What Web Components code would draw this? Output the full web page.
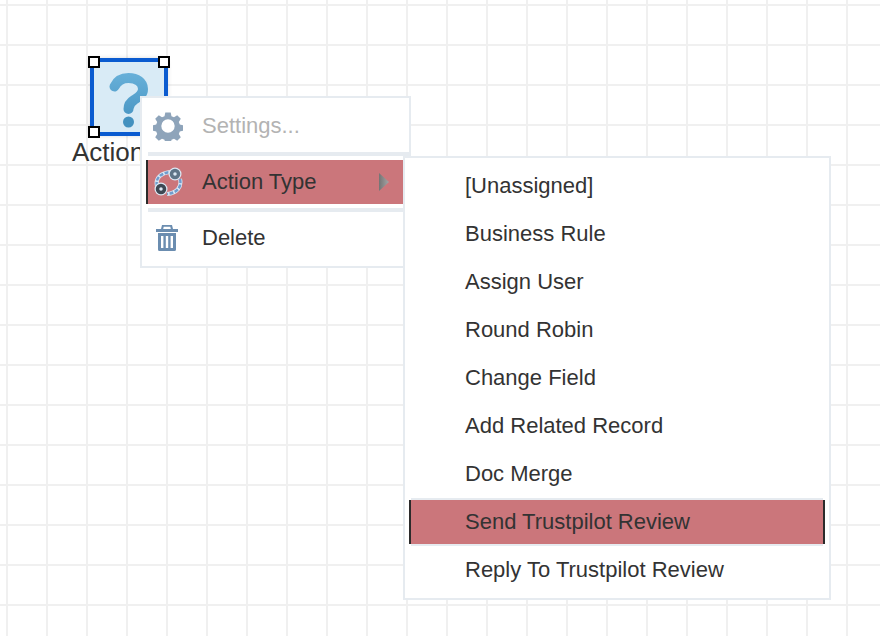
<!DOCTYPE html>
<html lang="en">
<head>
<meta charset="UTF-8">
<title>Workflow designer</title>
<style>
  html, body { margin: 0; padding: 0; background: #fff; }
  body { font-family: "Liberation Sans", Arial, sans-serif; color: #333; }
  svg { display: block; }
</style>
</head>
<body>
<flow-canvas>
  <flow-node label="Action"></flow-node>

  <context-menu style="left:140px;top:96px;width:263px">
    <menu-row disabled>
      <svg slot="icon" width="30" height="30" viewBox="0 0 30 30" style="filter:blur(.6px)"><path fill="#8ea4ba" fill-rule="evenodd" d="M12.300 1.500h5.400l.8 3.700 2.500 1 3.200-2 3.600 3.600-2 3.200 1 2.500 3.700.8v5.400l-3.700.8-1 2.500 2 3.200-3.600 3.600-3.200-2-2.500 1-.8 3.700h-5.400l-.8-3.700-2.500-1-3.200 2-3.600-3.600 2-3.200-1-2.500-3.700-.8v-5.400l3.700-.8 1-2.500-2-3.200 3.600-3.600 3.200 2 2.500-1zM15 8.300a6.700 6.700 0 1 0 0 13.400 6.700 6.700 0 0 0 0-13.400z"/></svg>
      Settings...
    </menu-row>
    <menu-divider></menu-divider>
    <menu-row active arrow>
      <svg slot="icon" width="30" height="30" viewBox="0 0 30 30" fill="none" style="filter:blur(.5px)">
        <path d="M4 19C2 11 8 6 17 5M27 12c2 8-3 14-13 15" stroke="#dce8f4" stroke-width="4"/>
        <path d="M4 19C2 11 8 6 17 5M27 12c2 8-3 14-13 15" stroke="#6f9ccd" stroke-width="2.500" stroke-dasharray="4 1.500"/>
        <circle cx="22" cy="7" r="6.500" fill="#dce8f4"/>
        <circle cx="22" cy="7" r="3.500" stroke="#5f7488" stroke-width="3.500"/>
        <circle cx="8" cy="22" r="6.500" fill="#dce8f4"/>
        <circle cx="8" cy="22" r="3.500" stroke="#3e4854" stroke-width="3.500"/>
      </svg>
      Action Type
    </menu-row>
    <menu-divider></menu-divider>
    <menu-row>
      <svg slot="icon" width="30" height="30" viewBox="1 0 30 30" style="filter:blur(.4px)"><path fill="#6b8db0" fill-rule="evenodd" d="M10 2h10l1 4h5v3H4V6h5zM11.700 3.700l-.5 2.300h7.600l-.5-2.300zM6 10h18v16.500a1.500 1.500 0 0 1-1.500 1.500h-15A1.500 1.500 0 0 1 6 26.500zm3 3v12h2.400V13zm4.800 0v12h2.400V13zm4.800 0v12H21V13z"/></svg>
      Delete
    </menu-row>
  </context-menu>

  <context-menu sub style="left:403px;top:156px;width:416px">
    <menu-row>[Unassigned]</menu-row>
    <menu-row>Business Rule</menu-row>
    <menu-row>Assign User</menu-row>
    <menu-row>Round Robin</menu-row>
    <menu-row>Change Field</menu-row>
    <menu-row>Add Related Record</menu-row>
    <menu-row>Doc Merge</menu-row>
    <menu-row active framed>Send Trustpilot Review</menu-row>
    <menu-row>Reply To Trustpilot Review</menu-row>
  </context-menu>
</flow-canvas>

<script>
  // grid background, everything on it sits at its own canvas position
  class FlowCanvas extends HTMLElement {
    constructor() {
      super();
      this.attachShadow({ mode: 'open' }).innerHTML = `
        <style>
          :host {
            display: block;
            position: relative;
            width: 880px;
            height: 636px;
            overflow: hidden;
            background-color: #fff;
            background-image:
              linear-gradient(to right, #f0f0f0 2px, transparent 2px),
              linear-gradient(to bottom, #f0f0f0 2px, transparent 2px);
            background-size: 40px 40px;
            background-position: 6px 4px;
          }
        </style>
        <slot></slot>`;
    }
  }

  class FlowNode extends HTMLElement {
    constructor() {
      super();
      this.attachShadow({ mode: 'open' }).innerHTML = `
        <style>
          :host { position: absolute; left: 72px; top: 56px; display: block; width: 120px; }
          .box {
            box-sizing: border-box;
            margin: 2px 0 0 18px;
            width: 78px;
            height: 78px;
            border: 4px solid #0a5bd0;
            border-radius: 7px;
            background: #d9ebf6;
            box-shadow: 0 0 4px rgba(0, 0, 0, .15);
            display: flex;
            align-items: center;
            justify-content: center;
          }
          .label { font-size: 26px; line-height: 30px; margin-top: 1px; color: #333; }
          .handle {
            position: absolute;
            box-sizing: border-box;
            width: 12px;
            height: 12px;
            background: #fff;
            border: 2px solid #000;
          }
        </style>
        <div class="box">
          <svg width="56" height="68" viewBox="0 0 56 68" fill="none" style="filter:blur(.4px)">
            <defs>
              <linearGradient id="q" gradientUnits="userSpaceOnUse" x1="0" y1="10" x2="0" y2="64">
                <stop offset="0" stop-color="#68b0d9"/>
                <stop offset="1" stop-color="#4391bf"/>
              </linearGradient>
            </defs>
            <path d="M13.500 23.500C16 18 21 15 27.500 15 36 15 42 19.500 42 26 42 32 37.500 34 33 37 29 39.500 27.500 42 27.500 46" stroke="url(#q)" stroke-width="10" stroke-linecap="round"/>
            <circle cx="27.500" cy="59" r="5.500" fill="#4391bf"/>
          </svg>
        </div>
        <div class="label"></div>
        <span class="handle" style="left:16px;top:0"></span>
        <span class="handle" style="left:86px;top:0"></span>
        <span class="handle" style="left:16px;top:70px"></span>`;
      this.shadowRoot.querySelector('.label').textContent = this.getAttribute('label');
    }
  }

  class ContextMenu extends HTMLElement {
    constructor() {
      super();
      this.attachShadow({ mode: 'open' }).innerHTML = `
        <style>
          :host {
            position: absolute;
            display: flex;
            flex-direction: column;
            gap: 4px;
            padding: 6px 0 6px 4px;
            background: #fff;
            border: 2px solid #e6ebf0;
            color: #333;
            --row-pad: 0;
          }
          :host([sub]) { gap: 0; padding: 4px; --row-pad: 2px; }
        </style>
        <slot></slot>`;
    }
  }

  class MenuDivider extends HTMLElement {
    constructor() {
      super();
      this.attachShadow({ mode: 'open' }).innerHTML = `
        <style>
          :host { display: block; height: 4px; margin-left: 2px; background: #e6ebf0; }
        </style>`;
    }
  }

  class MenuRow extends HTMLElement {
    constructor() {
      super();
      this.attachShadow({ mode: 'open' }).innerHTML = `
        <style>
          :host { display: block; padding: var(--row-pad) 0; font-size: 22px; white-space: nowrap; }
          .row {
            display: flex;
            align-items: center;
            box-sizing: border-box;
            height: 44px;
            border-left: 2px solid transparent;
            border-right: 2px solid transparent;
          }
          .icon { flex: none; box-sizing: border-box; width: 54px; padding-right: 14px; display: flex; justify-content: center; }
          .text { flex: 1; }
          .arrow {
            display: none;
            width: 10px;
            height: 18px;
            margin-right: 18px;
            background: linear-gradient(to right, #747474, #a5a5a5);
            clip-path: polygon(0 0, 100% 50%, 0 100%);
          }
          :host([disabled]) .text { color: #b3b3b3; }
          :host([active]) .row { background: #cb767b; background-clip: padding-box; border-left-color: #2b2b2b; }
          :host([framed]) { background: linear-gradient(#e6ebf0, #e6ebf0) 2px 0 / calc(100% - 4px) 100% no-repeat; }
          :host([framed]) .row { border-right-color: #2b2b2b; }
          :host([arrow]) .arrow { display: block; }
        </style>
        <div class="row">
          <span class="icon"><slot name="icon"></slot></span>
          <span class="text"><slot></slot></span>
          <span class="arrow"></span>
        </div>`;
    }
  }

  customElements.define('flow-canvas', FlowCanvas);
  customElements.define('flow-node', FlowNode);
  customElements.define('context-menu', ContextMenu);
  customElements.define('menu-divider', MenuDivider);
  customElements.define('menu-row', MenuRow);
</script>
</body>
</html>
